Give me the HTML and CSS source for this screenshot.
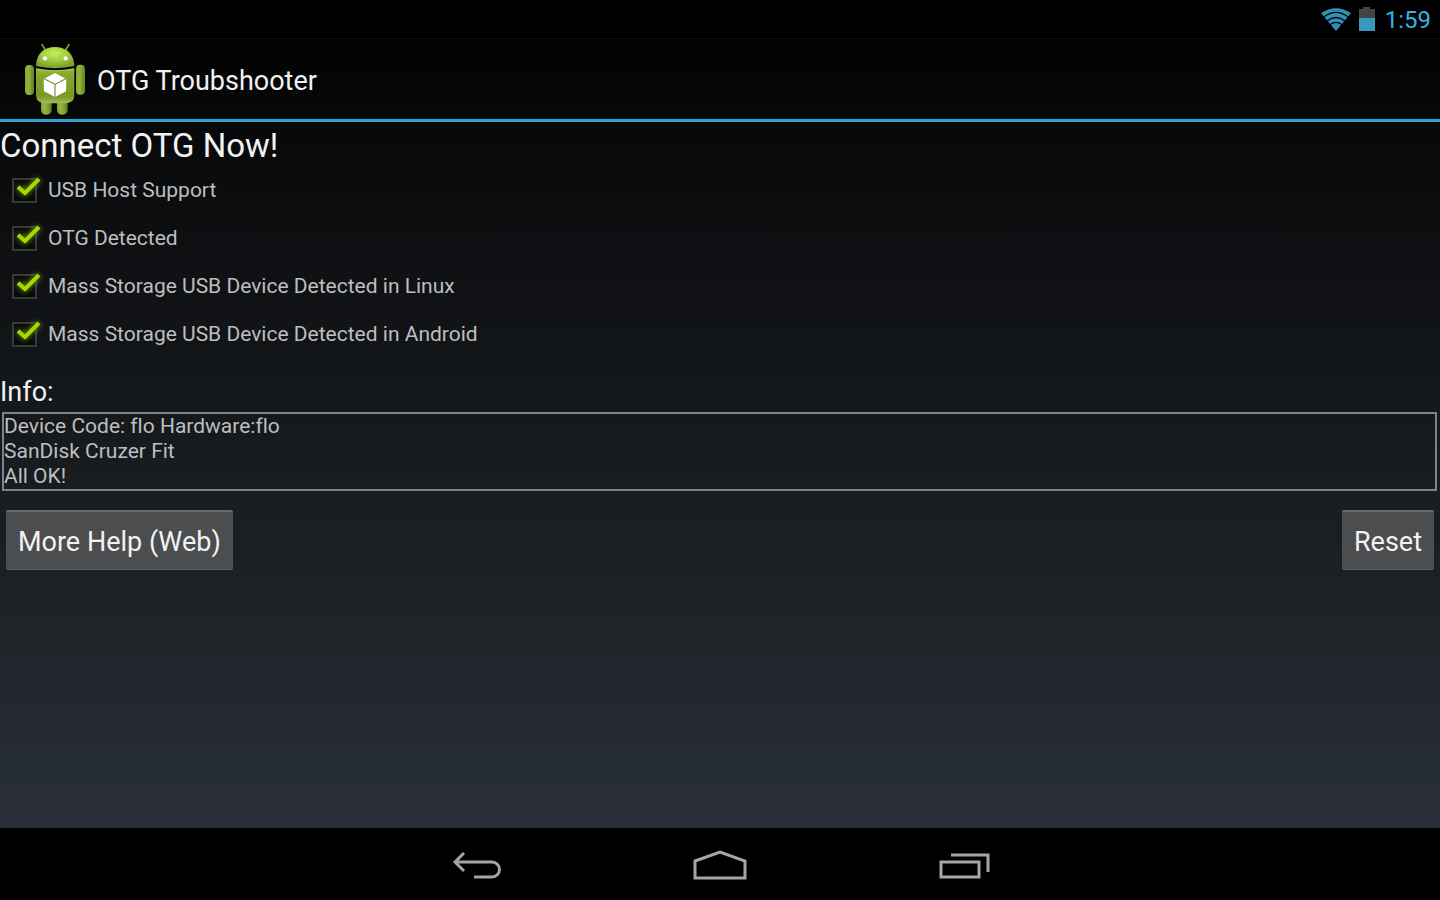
FILE: index.html
```html
<!DOCTYPE html>
<html lang="en">
<head>
<meta charset="utf-8">
<title>OTG Troubshooter</title>
<link rel="stylesheet" href="styles.css">
</head>
<body>
<div class="status">
  <svg class="wifi" width="30" height="23" viewBox="0 0 90 69" aria-hidden="true">
    <path d="M45 69 0 16Q45-14 90 16Z" fill="#318eb8"/>
    <g fill="none" stroke="#000" stroke-width="4"><path d="M8 27Q45-1 82 27"/><path d="M18 39Q45 18 72 39"/><path d="M27 50Q45 36 63 50"/></g>
  </svg>
  <svg class="battery" width="16" height="24" viewBox="0 0 16 24" aria-hidden="true">
    <path d="M4 0h7v2h5v10H0V2h4z" fill="#444"/><path d="M0 11h16v13H0z" fill="#3b98bd"/>
  </svg>
  <time>1:59</time>
</div>
<header class="appbar">
  <svg width="62" height="72" viewBox="27 15 186 216" aria-hidden="true">
    <defs>
      <linearGradient id="limb" x1="0" x2="1" y1="0" y2="0"><stop offset="0" stop-color="#86a733"/><stop offset=".4" stop-color="#94b53c"/><stop offset="1" stop-color="#62801f"/></linearGradient>
      <linearGradient id="torso" x1="0" x2="0" y1="0" y2="1"><stop offset="0" stop-color="#9cb93f"/><stop offset=".2" stop-color="#86a62c"/><stop offset=".8" stop-color="#789923"/><stop offset="1" stop-color="#a6bd65"/></linearGradient>
      <radialGradient id="skull" cx=".48" cy=".3" r=".65"><stop offset="0" stop-color="#c2f25c"/><stop offset=".5" stop-color="#a4cf40"/><stop offset="1" stop-color="#7da32b"/></radialGradient>
    </defs>
    <path d="m81 20 11 17m70-17-11 17" stroke="#87a93a" stroke-width="5" stroke-linecap="round"/>
    <rect x="78" y="175" width="32" height="55" rx="15" fill="url(#limb)"/>
    <rect x="126" y="175" width="32" height="55" rx="15" fill="url(#limb)"/>
    <rect x="30" y="81" width="27" height="90" rx="12" fill="url(#limb)"/>
    <rect x="183" y="80" width="27" height="90" rx="12" fill="url(#limb)"/>
    <path d="M63 84C64 46 87 27 120 27s57 19 58 57q-58 13-115 0Z" fill="url(#skull)"/>
    <path d="M63 91q57 12 115 0v80q0 25-29 25H92q-29 0-29-25Z" fill="url(#torso)"/>
    <path d="M65 93q56 11 111 0" fill="none" stroke="#bad66a" stroke-width="2"/>
    <circle cx="90" cy="61" r="6.500" fill="#fff"/><circle cx="152" cy="61" r="6.500" fill="#fff"/>
    <path d="m120 105 34 18-1 37-33 17-33-17-1-37Z" fill="#fff"/>
    <path d="m87 122 33 17 33-17m-33 17v38" fill="none" stroke="#60782a" stroke-width="3"/>
  </svg>
  <h1>OTG Troubshooter</h1>
</header>
<main>
  <h2>Connect OTG Now!</h2>
  <div class="checks">
    <label class="check"><span class="box"><input type="checkbox" checked><svg width="35" height="30" viewBox="0 0 35 30" aria-hidden="true"><path d="m6 13 7 6L27 5"/></svg></span>USB Host Support</label>
    <label class="check"><span class="box"><input type="checkbox" checked><svg width="35" height="30" viewBox="0 0 35 30" aria-hidden="true"><path d="m6 13 7 6L27 5"/></svg></span>OTG Detected</label>
    <label class="check"><span class="box"><input type="checkbox" checked><svg width="35" height="30" viewBox="0 0 35 30" aria-hidden="true"><path d="m6 13 7 6L27 5"/></svg></span>Mass Storage USB Device Detected in Linux</label>
    <label class="check"><span class="box"><input type="checkbox" checked><svg width="35" height="30" viewBox="0 0 35 30" aria-hidden="true"><path d="m6 13 7 6L27 5"/></svg></span>Mass Storage USB Device Detected in Android</label>
  </div>
  <h3>Info:</h3>
  <div class="info">Device Code: flo Hardware:flo<br>SanDisk Cruzer Fit<br>All OK!</div>
  <div class="actions">
    <button type="button">More Help (Web)</button>
    <button type="button">Reset</button>
  </div>
</main>
<nav class="navbar">
  <button type="button" aria-label="Back"><svg width="54" height="30" viewBox="0 0 54 30"><path d="m15 3-9 9 9 9M7 12h36a7 7 0 0 1 0 15H25"/></svg></button>
  <button type="button" aria-label="Home"><svg width="54" height="30" viewBox="0 0 54 30"><path d="M2 11 27 2l25 9v17H2Z"/></svg></button>
  <button type="button" aria-label="Recent apps"><svg width="54" height="30" viewBox="0 0 54 30"><path d="M4 12h38v15H4ZM14 5h37v17"/></svg></button>
</nav>
</body>
</html>
```
FILE: styles.css
```css
* { box-sizing: border-box; }
body {
  margin: 0;
  min-height: 100vh;
  display: flex;
  flex-direction: column;
  background: linear-gradient(#000 0, #07080a 120px, #15181b 400px, #1c2024 560px, #272d35 780px, #2a2e39 828px);
  color: #f2f2f2;
  font-family: Roboto, sans-serif;
}
h1, h2, h3 { margin: 0; font-weight: 400; }
.status {
  height: 38px;
  padding-right: 9px;
  display: flex;
  align-items: center;
  justify-content: flex-end;
  gap: 8px;
  background: #000;
  color: #33b5e5;
  font-size: 24px;
}
.status time { margin-left: 2px; padding-top: 1px; }
.appbar {
  height: 84px;
  padding-left: 24px;
  display: flex;
  align-items: center;
  gap: 11px;
  border-top: 1px solid #0c0c0c;
  border-bottom: 3px solid #2aa5d8;
  background: linear-gradient(#020202, #070808);
}
h1 { padding-top: 3px; font-size: 27px; line-height: 36px; }
main { flex: 1; }
h2 { padding-top: 4px; font-size: 33px; line-height: 40px; }
.check {
  height: 48px;
  padding-left: 12px;
  display: flex;
  align-items: center;
  gap: 11px;
  color: #bebebe;
  font-size: 21px;
}
.box { position: relative; width: 25px; height: 25px; }
.box input {
  appearance: none;
  display: block;
  width: 25px;
  height: 25px;
  margin: 0;
  border: 2px solid #37393b;
  background: #08090a;
}
.box svg {
  position: absolute;
  left: 0;
  top: -4px;
  overflow: visible;
  pointer-events: none;
  fill: none;
  stroke: #a3d900;
  stroke-width: 4px;
  filter: drop-shadow(0 0 3px #7fb000);
}
h3 { padding-top: 16px; font-size: 27px; line-height: 36px; }
.info {
  margin: 2px 3px 0 2px;
  border: 2px solid #808284;
  color: #bebebe;
  font-size: 21px;
  line-height: 25px;
  font-variant-ligatures: none;
}
.actions {
  display: flex;
  justify-content: space-between;
  padding: 19px 6px;
}
.actions button {
  height: 60px;
  padding: 2px 12px 0;
  border: 0;
  border-top: 2px solid #66686a;
  border-bottom: 1px solid #5a5c5e;
  border-radius: 2px;
  background: #4b4d4f;
  color: #f2f2f2;
  font: 27px/36px Roboto, sans-serif;
}
.navbar {
  height: 72px;
  padding-top: 2px;
  display: flex;
  justify-content: center;
  background: #000;
}
.navbar button {
  width: 244px;
  padding: 0;
  border: 0;
  background: none;
}
.navbar svg {
  display: block;
  margin: auto;
  fill: none;
  stroke: #a5a5a5;
  stroke-width: 3px;
}
```
